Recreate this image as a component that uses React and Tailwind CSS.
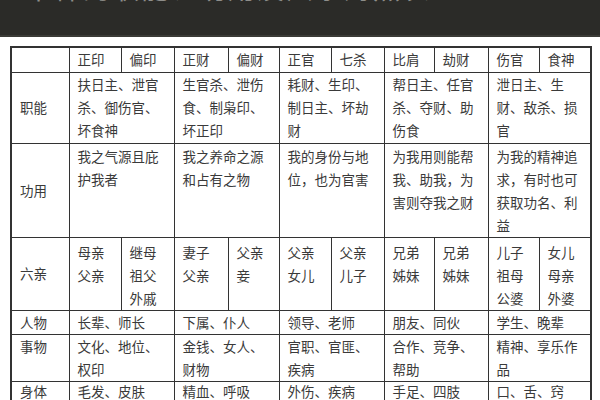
import React from "react";

const pairs = [
  ["正印", "偏印"],
  ["正财", "偏财"],
  ["正官", "七杀"],
  ["比肩", "劫财"],
  ["伤官", "食神"],
];

const zhineng = [
  ["扶日主、泄官", "杀、御伤官、", "坏食神"],
  ["生官杀、泄伤", "食、制枭印、", "坏正印"],
  ["耗财、生印、", "制日主、坏劫", "财"],
  ["帮日主、任官", "杀、夺财、助", "伤食"],
  ["泄日主、生", "财、敌杀、损", "官"],
];

const gongyong = [
  ["我之气源且庇", "护我者"],
  ["我之养命之源", "和占有之物"],
  ["我的身份与地", "位，也为官害"],
  ["为我用则能帮", "我、助我，为", "害则夺我之财"],
  ["为我的精神追", "求，有时也可", "获取功名、利", "益"],
];

const liuqin = [
  [["母亲", "父亲"], ["继母", "祖父", "外戚"]],
  [["妻子", "父亲"], ["父亲", "妾"]],
  [["父亲", "女儿"], ["父亲", "儿子"]],
  [["兄弟", "姊妹"], ["兄弟", "姊妹"]],
  [["儿子", "祖母", "公婆"], ["女儿", "母亲", "外婆"]],
];

const renwu = ["长辈、师长", "下属、仆人", "领导、老师", "朋友、同伙", "学生、晚辈"];

const shiwu = [
  ["文化、地位、", "权印"],
  ["金钱、女人、", "财物"],
  ["官职、官匪、", "疾病"],
  ["合作、竞争、", "帮助"],
  ["精神、享乐作", "品"],
];

const shenti = ["毛发、皮肤", "精血、呼吸", "外伤、疾病", "手足、四肢", "口、舌、窍"];

const widths = [58, 52, 53, 54, 51, 52, 53, 50, 54, 51, 52];

const Lines = ({ lines }) => (
  <>
    {lines.map((l, i) => (
      <div key={i}>{l}</div>
    ))}
  </>
);

const td = "border border-[#333] pl-[8px] align-top";
const label = "border border-[#333] pl-[8px] align-middle";

export default function App() {
  return (
    <div
      className="w-[600px] h-[400px] overflow-hidden bg-white text-[#3a3a3a]"
      style={{ fontFamily: '"Noto Sans CJK SC", "Noto Sans", sans-serif' }}
    >
      {/* dark banner, title mostly cropped off the top */}
      <div className="h-[37px] bg-[#2b2b28] overflow-hidden border-b-2 border-[#3a3a36]">
        <div className="-mt-[30px] pl-[25px] text-[27px] leading-[36px] text-[#8e8e8a] tracking-[2px]">
          十神的职能、功用及六亲对照表
        </div>
      </div>
      <div className="pt-[9px] pl-[10px]">
        <table className="table-fixed border-collapse border-2 border-[#333] text-[13.5px] leading-[23px] w-[580px]">
          <colgroup>
            {widths.map((w, i) => (
              <col key={i} style={{ width: w }} />
            ))}
          </colgroup>
          <tbody>
            <tr className="h-[25px]">
              <td className={label}></td>
              {pairs.flat().map((h) => (
                <td key={h} className={label}>
                  {h}
                </td>
              ))}
            </tr>
            <tr className="h-[71px]">
              <td className={label}>职能</td>
              {zhineng.map((c, i) => (
                <td key={i} colSpan={2} className={td}>
                  <Lines lines={c} />
                </td>
              ))}
            </tr>
            <tr className="h-[94px]">
              <td className={label}>功用</td>
              {gongyong.map((c, i) => (
                <td key={i} colSpan={2} className={`${td} pt-[1px]`}>
                  <Lines lines={c} />
                </td>
              ))}
            </tr>
            <tr className="h-[73px]">
              <td className={label}>六亲</td>
              {liuqin.flatMap((p, i) =>
                p.map((c, j) => (
                  <td key={`${i}-${j}`} className={`${td} pt-[3px]`}>
                    <Lines lines={c} />
                  </td>
                ))
              )}
            </tr>
            <tr className="h-[23px]">
              <td className={label}>人物</td>
              {renwu.map((c, i) => (
                <td key={i} colSpan={2} className={label}>
                  {c}
                </td>
              ))}
            </tr>
            <tr className="h-[47px]">
              <td className={td}>事物</td>
              {shiwu.map((c, i) => (
                <td key={i} colSpan={2} className={td}>
                  <Lines lines={c} />
                </td>
              ))}
            </tr>
            <tr className="h-[60px]">
              <td className={`${td} leading-[18px]`}>身体</td>
              {shenti.map((c, i) => (
                <td key={i} colSpan={2} className={`${td} leading-[18px]`}>
                  {c}
                </td>
              ))}
            </tr>
          </tbody>
        </table>
      </div>
    </div>
  );
}
